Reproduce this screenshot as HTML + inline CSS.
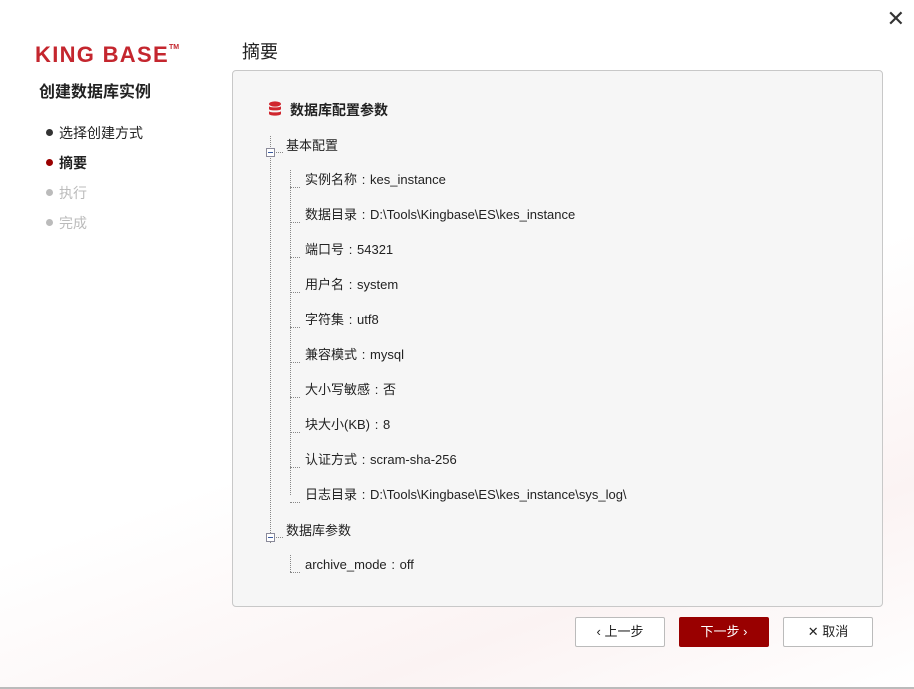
<!DOCTYPE html>
<html><head><meta charset="utf-8"><style>
*{margin:0;padding:0;box-sizing:border-box}
body{width:914px;height:689px;position:relative;overflow:hidden;background:linear-gradient(160deg,#fff 55%,#fbf3f3 80%,#fff 100%);font-family:"Liberation Sans","Noto Sans CJK SC",sans-serif;color:#222}
.a{position:absolute;white-space:nowrap}
.logo{left:35px;top:42px;font-size:22px;font-weight:bold;color:#c4262e;letter-spacing:1.3px}
.logo sup{font-size:7px;vertical-align:top;position:relative;top:2px;letter-spacing:0}
.step{left:46px;font-size:14px}
.dot{display:inline-block;width:7px;height:7px;border-radius:50%;margin-right:6px;vertical-align:2px}
.panel{left:232px;top:70px;width:651px;height:537px;border:1px solid #c8c8c8;border-radius:4px;background:#f6f6f6}
.item{font-size:13px;left:305px}
.c{display:inline-block;width:13px;text-align:center}
.vl{position:absolute;border-left:1px dotted #888}
.hl{position:absolute;border-top:1px dotted #888}
.mb{position:absolute;width:9px;height:9px;border:1px solid #8a8a9a;background:#fff}
.mb:after{content:"";position:absolute;left:1px;top:3px;width:5px;height:1px;background:#3a5aa0}
.btn{top:617px;width:90px;height:30px;border:1px solid #bbb;background:#fff;font-size:13px;text-align:center;line-height:28px;border-radius:2px}
</style></head><body>
<div class="a" style="right:9px;top:6px;font-size:22px;color:#333">✕</div>
<div class="a logo">KING BASE<sup>TM</sup></div>
<div class="a" style="left:39px;top:78px;font-size:16px;font-weight:bold">创建数据库实例</div>
<div class="a step" style="top:123px"><span class="dot" style="background:#333"></span>选择创建方式</div>
<div class="a step" style="top:153px;font-weight:bold"><span class="dot" style="background:#9a0000"></span>摘要</div>
<div class="a step" style="top:183px;color:#bbb"><span class="dot" style="background:#bbb"></span>执行</div>
<div class="a step" style="top:213px;color:#bbb"><span class="dot" style="background:#bbb"></span>完成</div>
<div class="a" style="left:242px;top:38px;font-size:18px">摘要</div>
<div class="a panel"></div>
<svg class="a" style="left:268px;top:101px" width="14" height="16" viewBox="0 0 14 16"><g fill="#d0262e"><ellipse cx="7" cy="3" rx="6" ry="2.6"/><path d="M1 5.2c1 1.6 11 1.6 12 0v3c-1 1.6-11 1.6-12 0z"/><path d="M1 10.2c1 1.6 11 1.6 12 0v2.8c-1 2.2-11 2.2-12 0z"/></g></svg>
<div class="a" style="left:290px;top:100px;font-size:14px;font-weight:bold">数据库配置参数</div>
<div class="vl" style="left:270px;top:136px;height:407px"></div>
<div class="hl" style="left:274px;top:152px;width:9px"></div>
<div class="mb" style="left:266px;top:148px"></div>
<div class="a" style="left:286px;top:135px;font-size:13px">基本配置</div>
<div class="vl" style="left:290px;top:170px;height:325px"></div>
<div class="hl" style="left:290px;top:187px;width:10px"></div>
<div class="hl" style="left:290px;top:222px;width:10px"></div>
<div class="hl" style="left:290px;top:257px;width:10px"></div>
<div class="hl" style="left:290px;top:292px;width:10px"></div>
<div class="hl" style="left:290px;top:327px;width:10px"></div>
<div class="hl" style="left:290px;top:362px;width:10px"></div>
<div class="hl" style="left:290px;top:397px;width:10px"></div>
<div class="hl" style="left:290px;top:432px;width:10px"></div>
<div class="hl" style="left:290px;top:467px;width:10px"></div>
<div class="hl" style="left:290px;top:502px;width:10px"></div>
<div class="a item" style="top:169px">实例名称<span class="c">:</span>kes_instance</div>
<div class="a item" style="top:204px">数据目录<span class="c">:</span>D:\Tools\Kingbase\ES\kes_instance</div>
<div class="a item" style="top:239px">端口号<span class="c">:</span>54321</div>
<div class="a item" style="top:274px">用户名<span class="c">:</span>system</div>
<div class="a item" style="top:309px">字符集<span class="c">:</span>utf8</div>
<div class="a item" style="top:344px">兼容模式<span class="c">:</span>mysql</div>
<div class="a item" style="top:379px">大小写敏感<span class="c">:</span>否</div>
<div class="a item" style="top:414px">块大小(KB)<span class="c">:</span>8</div>
<div class="a item" style="top:449px">认证方式<span class="c">:</span>scram-sha-256</div>
<div class="a item" style="top:484px">日志目录<span class="c">:</span>D:\Tools\Kingbase\ES\kes_instance\sys_log\</div>
<div class="hl" style="left:274px;top:537px;width:9px"></div>
<div class="mb" style="left:266px;top:533px"></div>
<div class="a" style="left:286px;top:520px;font-size:13px">数据库参数</div>
<div class="vl" style="left:290px;top:555px;height:17px"></div>
<div class="hl" style="left:290px;top:572px;width:10px"></div>
<div class="a item" style="top:557px">archive_mode<span class="c">:</span>off</div>
<div class="a btn" style="left:575px">‹ 上一步</div>
<div class="a btn" style="left:679px;background:#990000;border-color:#990000;color:#fff">下一步 ›</div>
<div class="a btn" style="left:783px">✕ 取消</div>
<div class="a" style="left:0;top:687px;width:914px;height:2px;background:#bbb"></div>
</body></html>
